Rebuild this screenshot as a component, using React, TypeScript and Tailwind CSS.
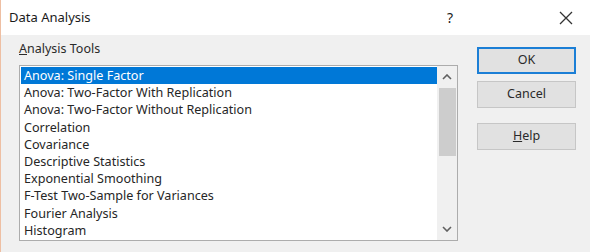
import React from 'react';

const tools = [
  'Anova: Single Factor',
  'Anova: Two-Factor With Replication',
  'Anova: Two-Factor Without Replication',
  'Correlation',
  'Covariance',
  'Descriptive Statistics',
  'Exponential Smoothing',
  'F-Test Two-Sample for Variances',
  'Fourier Analysis',
  'Histogram',
];

const DialogButton: React.FC<{ primary?: boolean; children: React.ReactNode; className?: string }> = ({
  primary,
  children,
  className,
}) => (
  <button
    className={
      'w-[99px] h-[27px] flex items-center justify-center bg-[#e1e1e1] text-[12.5px] text-[#2a2a2a] ' +
      (primary ? 'border-2 border-[#1c7fd6]' : 'border border-[#c6c6c6]') +
      (className ? ' ' + className : '')
    }
  >
    {children}
  </button>
);

export default function App() {
  return (
    <div
      className="w-[590px] h-[252px] flex flex-col border-l border-[#eebfa3] overflow-hidden"
      style={{ fontFamily: '"Noto Sans", "Open Sans", sans-serif' }}
    >
      {/* title bar */}
      <div className="h-[35px] bg-white flex items-center pl-[8px] text-[#1a1a1a]">
        <span className="text-[13px]">Data Analysis</span>
        <span className="ml-auto text-[14px] w-[20px] text-center mr-[99px]">?</span>
        <svg width="14" height="14" viewBox="0 0 14 14" className="mr-[17px]">
          <path d="M1 1 L13 13 M13 1 L1 13" stroke="#333" strokeWidth="1.3" />
        </svg>
      </div>

      {/* body */}
      <div className="flex-1 bg-[#f0f0f0] flex pl-[18px]">
        <div className="flex flex-col pt-[6px]">
          <div className="text-[12.5px] leading-[16px] text-[#2a2a2a] mb-[8px]">
            <span className="underline">A</span>nalysis Tools
          </div>
          <div className="w-[439px] h-[176px] bg-white border border-[#acacac] flex">
            <ul className="flex-1 pt-[1px] pl-[1px]">
              {tools.map((t, i) => (
                <li
                  key={t}
                  className={
                    'h-[17.2px] leading-[17px] pl-[3px] text-[12.6px] whitespace-nowrap ' +
                    (i === 0 ? 'bg-[#0078d7] text-white' : 'text-[#262626]')
                  }
                >
                  {t}
                </li>
              ))}
            </ul>
            <div className="w-[20px] bg-[#f0f0f0] flex flex-col items-center">
              <div className="h-[22px] flex items-center justify-center">
                <svg width="10" height="6" viewBox="0 0 10 6">
                  <path d="M1 5 L5 1 L9 5" fill="none" stroke="#606060" strokeWidth="1.6" />
                </svg>
              </div>
              <div className="w-[17px] h-[68px] bg-[#cdcdcd]" />
              <div className="flex-1" />
              <div className="h-[22px] flex items-center justify-center">
                <svg width="10" height="6" viewBox="0 0 10 6">
                  <path d="M1 1 L5 5 L9 1" fill="none" stroke="#606060" strokeWidth="1.6" />
                </svg>
              </div>
            </div>
          </div>
        </div>

        <div className="flex flex-col ml-[19px] pt-[12px]">
          <DialogButton primary>OK</DialogButton>
          <DialogButton className="mt-[7px]">Cancel</DialogButton>
          <DialogButton className="mt-[15px]">
            <span className="underline">H</span>elp
          </DialogButton>
        </div>
      </div>
    </div>
  );
}
